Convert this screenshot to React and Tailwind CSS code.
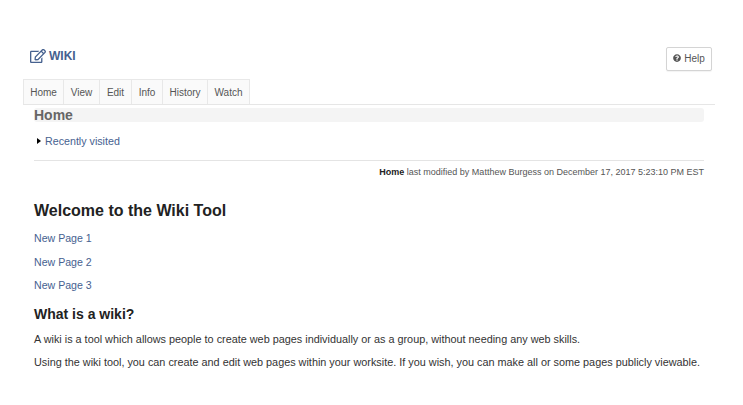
import { FaQuestionCircle, FaRegEdit } from "react-icons/fa";

const tabs = [
  { label: "Home", w: "w-[41px]" },
  { label: "View", w: "w-[36px]" },
  { label: "Edit", w: "w-[32px]" },
  { label: "Info", w: "w-[31px]" },
  { label: "History", w: "w-[45px]" },
  { label: "Watch", w: "w-[42px]" },
];

export default function App() {
  return (
    <div className="w-[743px] h-[405px] overflow-hidden bg-white font-['Liberation_Sans',Arial,sans-serif] text-[#333]">
      {/* Tool title */}
      <div className="flex items-start justify-between pl-[30px] pr-[31px] pt-[47px] h-[79px]">
        <div className="flex items-center gap-[3px] h-[18px] text-[#46618f]">
          <FaRegEdit size={16} />
          <span className="text-[12px] font-bold">WIKI</span>
        </div>
        <button className="flex items-center justify-center gap-[3px] w-[46px] h-[24px] pb-[2px] border border-[#d4d4d4] rounded-[2px] bg-white text-[10px] text-[#555] shadow-[0_1px_1px_rgba(0,0,0,0.05)]">
          <FaQuestionCircle size={8} />
          Help
        </button>
      </div>

      {/* Tabs */}
      <div className="flex h-[26px] ml-[23px] mr-[28px] border-b border-[#e6e6e6]">
        {tabs.map((t) => (
          <div
            key={t.label}
            className={`${t.w} h-[25px] flex items-center justify-center bg-[#fafafa] border-t border-r border-[#e8e8e8] first:border-l text-[10px] text-[#555]`}
          >
            {t.label}
          </div>
        ))}
      </div>

      <div className="pl-[34px] pr-[39px]">
        <div className="mt-[3px] h-[14px] flex items-center bg-[#f4f4f4] rounded-[3px] text-[14px] font-bold text-[#666]">
          Home
        </div>

        <div className="mt-[12px] h-[14px] flex items-center gap-[7px] text-[10.7px] text-[#46618f]">
          <span className="ml-[3px] w-0 h-0 border-y-[3px] border-y-transparent border-l-[4px] border-l-black" />
          <span className="-ml-[3px]">Recently visited</span>
        </div>

        <div className="mt-[12px] border-t border-[#e4e4e4] pt-[5px] text-right text-[9px] leading-[12px] text-[#555]">
          <span className="font-bold text-[#222]">Home</span> last modified by Matthew Burgess on December 17, 2017 5:23:10 PM EST
        </div>

        <h1 className="mt-[23px] text-[16px] leading-[20px] font-bold text-[#222]">Welcome to the Wiki Tool</h1>

        <div className="mt-[10px] flex flex-col gap-[9.6px] text-[10.6px] leading-[14px] text-[#46618f]">
          <p>New Page 1</p>
          <p>New Page 2</p>
          <p>New Page 3</p>
        </div>

        <h2 className="mt-[13px] text-[14px] leading-[18px] font-bold text-[#222]">What is a wiki?</h2>

        <p className="mt-[9px] text-[10.85px] leading-[14px] text-[#333] whitespace-nowrap">
          A wiki is a tool which allows people to create web pages individually or as a group, without needing any web skills.
        </p>
        <p className="mt-[9px] text-[10.85px] leading-[14px] text-[#333] whitespace-nowrap">
          Using the wiki tool, you can create and edit web pages within your worksite. If you wish, you can make all or some pages publicly viewable.
        </p>
      </div>
    </div>
  );
}
